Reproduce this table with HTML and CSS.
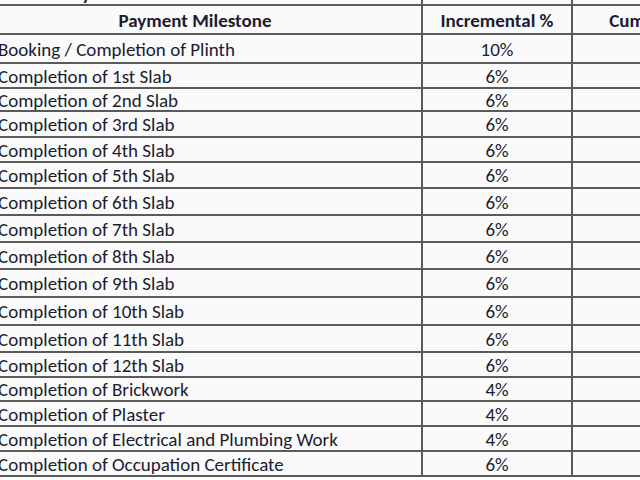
FILE: index.html
```html
<!DOCTYPE html>
<html>
<head>
<meta charset="utf-8">
<link rel="stylesheet" href="styles.css">
</head>
<body>
<div class="sheet">
  <div class="cell title"><span>Payment Plan</span></div>
  <div class="cell title"></div>
  <div class="cell title"></div>

  <div class="cell head milestone">Payment Milestone</div>
  <div class="cell head pct">Incremental %</div>
  <div class="cell head cum">Cumulative %</div>

  <div class="cell name">Booking / Completion of Plinth</div><div class="cell pct">10%</div><div class="cell cum"></div>
  <div class="cell name">Completion of 1st Slab</div><div class="cell pct">6%</div><div class="cell cum"></div>
  <div class="cell name">Completion of 2nd Slab</div><div class="cell pct">6%</div><div class="cell cum"></div>
  <div class="cell name">Completion of 3rd Slab</div><div class="cell pct">6%</div><div class="cell cum"></div>
  <div class="cell name">Completion of 4th Slab</div><div class="cell pct">6%</div><div class="cell cum"></div>
  <div class="cell name">Completion of 5th Slab</div><div class="cell pct">6%</div><div class="cell cum"></div>
  <div class="cell name">Completion of 6th Slab</div><div class="cell pct">6%</div><div class="cell cum"></div>
  <div class="cell name">Completion of 7th Slab</div><div class="cell pct">6%</div><div class="cell cum"></div>
  <div class="cell name">Completion of 8th Slab</div><div class="cell pct">6%</div><div class="cell cum"></div>
  <div class="cell name">Completion of 9th Slab</div><div class="cell pct">6%</div><div class="cell cum"></div>
  <div class="cell name">Completion of 10th Slab</div><div class="cell pct">6%</div><div class="cell cum"></div>
  <div class="cell name">Completion of 11th Slab</div><div class="cell pct">6%</div><div class="cell cum"></div>
  <div class="cell name">Completion of 12th Slab</div><div class="cell pct">6%</div><div class="cell cum"></div>
  <div class="cell name">Completion of Brickwork</div><div class="cell pct">4%</div><div class="cell cum"></div>
  <div class="cell name">Completion of Plaster</div><div class="cell pct">4%</div><div class="cell cum"></div>
  <div class="cell name">Completion of Electrical and Plumbing Work</div><div class="cell pct">4%</div><div class="cell cum"></div>
  <div class="cell name">Completion of Occupation Certificate</div><div class="cell pct">6%</div><div class="cell cum"></div>
</div>
</body>
</html>
```

FILE: styles.css
```css
html, body {
  margin: 0;
  padding: 0;
  background: #ffffff;
  overflow: hidden;
}

body {
  width: 640px;
  height: 480px;
  font-family: Carlito, Lato, "Open Sans", sans-serif;
  font-size: 19px;
  color: #1c1c30;
}

.sheet {
  display: grid;
  grid-template-columns: 452px 148px 180px;
  grid-template-rows: 30px 27px 27px 23px 21px 24px 23px 24px 25px 25px 25px 26px 26px 25px 23px 22px 23px 23px 23px;
  gap: 2px;
  padding-bottom: 2px;
  background: #5a5a5a;
  margin-left: -31px;
  margin-top: -26px;
  width: max-content;
}

.cell {
  background: #fafafa;
  display: flex;
  align-items: center;
  white-space: nowrap;
  line-height: 1;
  padding-top: 1px;
}

.title {
  align-items: flex-end;
  padding-left: 94px;
  padding-bottom: 1px;
  font-weight: bold;
}

.head {
  font-weight: bold;
  justify-content: center;
}

.name {
  padding-left: 29px;
}

.pct {
  justify-content: center;
}

.cum {
  justify-content: center;
}
```
